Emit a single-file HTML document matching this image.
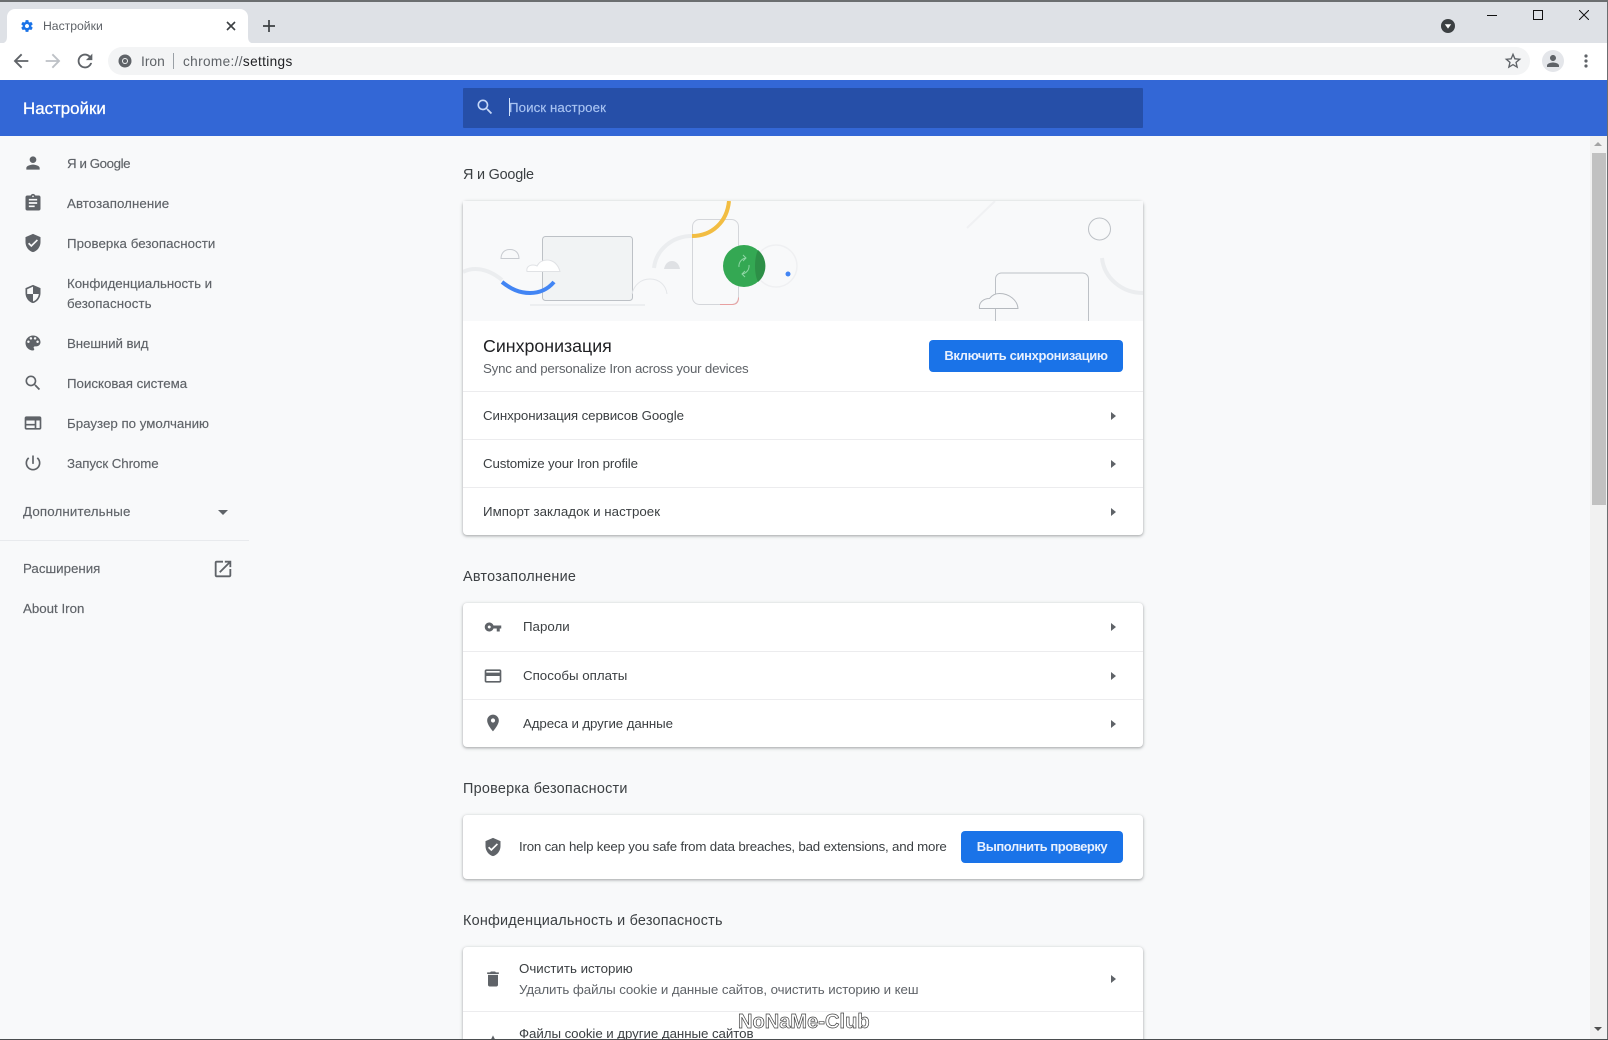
<!DOCTYPE html>
<html lang="ru"><head><meta charset="utf-8"><title>Настройки</title>
<style>
html,body{margin:0;padding:0;width:1608px;height:1040px;overflow:hidden;background:#f8f9fa}
body{position:relative;font-family:"Liberation Sans","Noto Sans CJK SC",sans-serif;font-size:13.3px;color:#3c4043}
.a{position:absolute}
.t{position:absolute;white-space:nowrap;line-height:20px;height:20px}
svg{position:absolute;display:block}
.g{fill:#5f6368}
.side{color:#5f6368;-webkit-text-stroke:.15px #5f6368}
.h2{font-size:14.4px;color:#3c4043;letter-spacing:.25px}
.card{position:absolute;left:463px;width:680px;background:#fff;border-radius:4px;box-shadow:0 1px 2px rgba(60,64,67,.3),0 1px 3px 1px rgba(60,64,67,.15)}
.sep{position:absolute;left:463px;width:680px;height:1px;background:#ececee}
.arr{position:absolute;left:1111px;width:0;height:0;border-left:5px solid #5f6368;border-top:4px solid transparent;border-bottom:4px solid transparent}
.btn{position:absolute;background:#1a73e8;border-radius:4px;color:#e8f0fe;font-weight:bold;text-align:center;height:32px;line-height:32px;font-size:13px;white-space:nowrap}
</style></head><body>

<!-- window chrome -->
<div class="a" style="left:0;top:0;width:1608px;height:43px;background:#dee1e6"></div>
<div class="a" style="left:0;top:0;width:1608px;height:2px;background:#6b6e70"></div>
<div class="a" style="left:0;top:43px;width:1608px;height:37px;background:#fff"></div>
<svg style="left:0;top:9px" width="262" height="35" viewBox="0 0 262 35"><path d="M0 34.5c5 0 7-2 7-7V8a8 8 0 0 1 8-8h225a8 8 0 0 1 8 8v19.5c0 5 2 7 7 7z" fill="#fff"/></svg>
<svg style="left:20px;top:19px" width="14" height="14" viewBox="0 0 24 24"><path fill="#1a73e8" d="M19.43 12.98c.04-.32.07-.64.07-.98s-.03-.66-.07-.98l2.11-1.65c.19-.15.24-.42.12-.64l-2-3.46c-.12-.22-.39-.3-.61-.22l-2.49 1c-.52-.4-1.08-.73-1.69-.98l-.38-2.65C14.46 2.18 14.25 2 14 2h-4c-.25 0-.46.18-.49.42l-.38 2.65c-.61.25-1.17.59-1.69.98l-2.49-1c-.23-.09-.49 0-.61.22l-2 3.46c-.13.22-.07.49.12.64l2.11 1.65c-.04.32-.07.65-.07.98s.03.66.07.98l-2.11 1.65c-.19.15-.24.42-.12.64l2 3.46c.12.22.39.3.61.22l2.49-1c.52.4 1.08.73 1.69.98l.38 2.65c.03.24.24.42.49.42h4c.25 0 .46-.18.49-.42l.38-2.65c.61-.25 1.17-.59 1.69-.98l2.49 1c.23.09.49 0 .61-.22l2-3.46c.12-.22.07-.49-.12-.64l-2.11-1.65zM12 15.5c-1.93 0-3.5-1.57-3.5-3.5s1.57-3.5 3.5-3.5 3.5 1.57 3.5 3.5-1.57 3.5-3.5 3.5z"/></svg>
<div class="t" style="left:43px;top:16px;font-size:12.2px;color:#5f6368">Настройки</div>
<svg style="left:226px;top:21px" width="10" height="10" viewBox="0 0 10 10"><path d="M1 1l8 8M9 1l-8 8" stroke="#3c4043" stroke-width="1.6"/></svg>
<svg style="left:263px;top:20px" width="12" height="12" viewBox="0 0 12 12"><path d="M6 0v12M0 6h12" stroke="#3c4043" stroke-width="1.7"/></svg>
<svg style="left:1441px;top:19px" width="14" height="14" viewBox="0 0 14 14"><circle cx="7" cy="7" r="7" fill="#3c4043"/><path d="M3.8 5.2h6.4L7 9.6z" fill="#fff"/></svg>
<div class="a" style="left:1487px;top:15px;width:10px;height:1px;background:#111"></div>
<div class="a" style="left:1533px;top:10px;width:8px;height:8px;border:1px solid #111"></div>
<svg style="left:1579px;top:10px" width="10" height="10" viewBox="0 0 10 10"><path d="M0 0l10 10M10 0L0 10" stroke="#111" stroke-width="1"/></svg>

<!-- toolbar -->
<svg style="left:10px;top:50px" width="22" height="22" viewBox="0 0 24 24"><path class="g" d="M20 11H7.83l5.59-5.59L12 4l-8 8 8 8 1.41-1.41L7.83 13H20v-2z"/></svg>
<svg style="left:42px;top:50px" width="22" height="22" viewBox="0 0 24 24"><path fill="#bdc1c6" d="M12 4l-1.41 1.41L16.17 11H4v2h12.17l-5.58 5.59L12 20l8-8z"/></svg>
<svg style="left:74px;top:50px" width="22" height="22" viewBox="0 0 24 24"><path class="g" d="M17.65 6.35C16.2 4.9 14.21 4 12 4c-4.42 0-7.99 3.58-7.99 8s3.57 8 7.99 8c3.73 0 6.84-2.55 7.73-6h-2.08c-.82 2.33-3.04 4-5.65 4-3.31 0-6-2.69-6-6s2.69-6 6-6c1.66 0 3.14.69 4.22 1.78L13 11h7V4l-2.35 2.35z"/></svg>
<div class="a" style="left:108px;top:47px;width:1422px;height:28px;border-radius:14px;background:#f3f4f5"></div>
<svg style="left:118px;top:54px" width="14" height="14" viewBox="0 0 14 14"><circle cx="7" cy="7" r="6.5" fill="#5f6368"/><circle cx="7" cy="7" r="3" fill="#f1f3f4"/><circle cx="7" cy="7" r="2" fill="#5f6368"/></svg>
<div class="t" style="left:141px;top:52px;font-size:13.8px;color:#5f6368">Iron</div>
<div class="a" style="left:173px;top:53px;width:1px;height:16px;background:#9aa0a6"></div>
<div class="t" style="left:183px;top:52px;font-size:13.6px;letter-spacing:.36px;color:#5f6368">chrome://<span style="color:#202124">settings</span></div>
<svg style="left:1503px;top:51px" width="20" height="20" viewBox="0 0 24 24"><path class="g" d="M22 9.24l-7.19-.62L12 2 9.19 8.63 2 9.24l5.46 4.73L5.82 21 12 17.27 18.18 21l-1.63-7.03L22 9.24zM12 15.4l-3.76 2.27 1-4.28-3.32-2.88 4.38-.38L12 6.1l1.71 4.04 4.38.38-3.32 2.88 1 4.28L12 15.4z"/></svg>
<div class="a" style="left:1542px;top:50px;width:22px;height:22px;border-radius:50%;background:#e4e6ea"></div>
<svg style="left:1544px;top:52px" width="18" height="18" viewBox="0 0 24 24"><path class="g" d="M12 12c2.21 0 4-1.79 4-4s-1.79-4-4-4-4 1.79-4 4 1.79 4 4 4zm0 2c-2.67 0-8 1.34-8 4v2h16v-2c0-2.66-5.33-4-8-4z"/></svg>
<svg style="left:1583px;top:54px" width="6" height="14" viewBox="0 0 6 14"><circle cx="3" cy="2" r="1.6" fill="#5f6368"/><circle cx="3" cy="7" r="1.6" fill="#5f6368"/><circle cx="3" cy="12" r="1.6" fill="#5f6368"/></svg>

<!-- header -->
<div class="a" style="left:0;top:80px;width:1608px;height:56px;background:#3367d6"></div>
<div class="t" style="left:23px;top:99px;font-size:16.9px;color:#fff;-webkit-text-stroke:.3px #fff">Настройки</div>
<div class="a" style="left:463px;top:88px;width:680px;height:40px;background:#264fa8;border-radius:1px"></div>
<svg style="left:475px;top:97px" width="20" height="20" viewBox="0 0 24 24"><path fill="#c6d8f8" d="M15.5 14h-.79l-.28-.27C15.41 12.59 16 11.11 16 9.5 16 5.91 13.09 3 9.5 3S3 5.91 3 9.5 5.91 16 9.5 16c1.61 0 3.09-.59 4.23-1.57l.27.28v.79l5 4.99L20.49 19l-4.99-5zm-6 0C7.01 14 5 11.99 5 9.5S7.01 5 9.5 5 14 7.01 14 9.5 11.99 14 9.5 14z"/></svg>
<div class="a" style="left:509px;top:98px;width:1px;height:18px;background:#d2e3fc"></div>
<div class="t" style="left:509px;top:98px;color:#a8c3f2;-webkit-text-stroke:.15px #a8c3f2;letter-spacing:.07px">Поиск настроек</div>

<!-- sidebar -->
<svg style="left:23px;top:153px" width="20" height="20" viewBox="0 0 24 24"><path class="g" d="M12 12c2.21 0 4-1.79 4-4s-1.79-4-4-4-4 1.79-4 4 1.79 4 4 4zm0 2c-2.67 0-8 1.34-8 4v2h16v-2c0-2.66-5.33-4-8-4z"/></svg>
<div class="t side" style="left:67px;top:154px;letter-spacing:-.42px">Я и Google</div>
<svg style="left:23px;top:193px" width="20" height="20" viewBox="0 0 24 24"><path class="g" d="M19 3h-4.18C14.4 1.84 13.3 1 12 1c-1.3 0-2.4.84-2.82 2H5c-1.1 0-2 .9-2 2v14c0 1.1.9 2 2 2h14c1.1 0 2-.9 2-2V5c0-1.1-.9-2-2-2zm-7 0c.55 0 1 .45 1 1s-.45 1-1 1-1-.45-1-1 .45-1 1-1zm2 14H7v-2h7v2zm3-4H7v-2h10v2zm0-4H7V7h10v2z"/></svg>
<div class="t side" style="left:67px;top:194px;letter-spacing:.07px">Автозаполнение</div>
<svg style="left:23px;top:233px" width="20" height="20" viewBox="0 0 24 24"><path class="g" d="M12 1L3 5v6c0 5.55 3.84 10.74 9 12 5.16-1.26 9-6.45 9-12V5l-9-4zm-2 16l-4-4 1.41-1.41L10 14.17l6.59-6.59L18 9l-8 8z"/></svg>
<div class="t side" style="left:67px;top:234px;letter-spacing:.05px">Проверка безопасности</div>
<svg style="left:23px;top:284px" width="20" height="20" viewBox="0 0 24 24"><path class="g" d="M12 1L3 5v6c0 5.55 3.84 10.74 9 12 5.16-1.26 9-6.45 9-12V5l-9-4zm0 10.99h7c-.53 4.12-3.28 7.79-7 8.94V12H5V6.3l7-3.11v8.8z"/></svg>
<div class="t side" style="left:67px;top:274px;letter-spacing:-.05px">Конфиденциальность и</div>
<div class="t side" style="left:67px;top:294px;letter-spacing:.09px">безопасность</div>
<svg style="left:23px;top:333px" width="20" height="20" viewBox="0 0 24 24"><path class="g" d="M12 3c-4.97 0-9 4.03-9 9s4.03 9 9 9c.83 0 1.5-.67 1.5-1.5 0-.39-.15-.74-.39-1.01-.23-.26-.38-.61-.38-.99 0-.83.67-1.5 1.5-1.5H16c2.76 0 5-2.24 5-5 0-4.42-4.03-8-9-8zm-5.5 9c-.83 0-1.5-.67-1.5-1.5S5.67 9 6.5 9 8 9.67 8 10.5 7.33 12 6.5 12zm3-4C8.67 8 8 7.33 8 6.5S8.67 5 9.5 5s1.5.67 1.5 1.5S10.33 8 9.5 8zm5 0c-.83 0-1.5-.67-1.5-1.5S13.67 5 14.5 5s1.5.67 1.5 1.5S15.33 8 14.5 8zm3 4c-.83 0-1.5-.67-1.5-1.5S16.67 9 17.5 9s1.5.67 1.5 1.5-.67 1.5-1.5 1.5z"/></svg>
<div class="t side" style="left:67px;top:334px;letter-spacing:-.09px">Внешний вид</div>
<svg style="left:23px;top:373px" width="20" height="20" viewBox="0 0 24 24"><path class="g" d="M15.5 14h-.79l-.28-.27C15.41 12.59 16 11.11 16 9.5 16 5.91 13.09 3 9.5 3S3 5.91 3 9.5 5.91 16 9.5 16c1.61 0 3.09-.59 4.23-1.57l.27.28v.79l5 4.99L20.49 19l-4.99-5zm-6 0C7.01 14 5 11.99 5 9.5S7.01 5 9.5 5 14 7.01 14 9.5 11.99 14 9.5 14z"/></svg>
<div class="t side" style="left:67px;top:374px">Поисковая система</div>
<svg style="left:23px;top:413px" width="20" height="20" viewBox="0 0 24 24"><path class="g" fill-rule="evenodd" d="M4 4h16c1.1 0 2 .9 2 2v12c0 1.1-.9 2-2 2H4c-1.1 0-2-.9-2-2V6c0-1.1.9-2 2-2zm0 5v4h10V9H4zm0 6v3h10v-3H4zm12-6v9h4V9h-4z"/></svg>
<div class="t side" style="left:67px;top:414px">Браузер по умолчанию</div>
<svg style="left:23px;top:453px" width="20" height="20" viewBox="0 0 24 24"><path class="g" d="M13 3h-2v10h2V3zm4.83 2.17l-1.42 1.42C17.99 7.86 19 9.81 19 12c0 3.87-3.13 7-7 7s-7-3.13-7-7c0-2.19 1.01-4.14 2.58-5.42L6.17 5.17C4.23 6.82 3 9.26 3 12c0 4.97 4.03 9 9 9s9-4.03 9-9c0-2.74-1.23-5.18-3.17-6.83z"/></svg>
<div class="t side" style="left:67px;top:454px;letter-spacing:-.08px">Запуск Chrome</div>
<div class="t side" style="left:23px;top:502px;letter-spacing:.16px">Дополнительные</div>
<div class="a" style="left:218px;top:510px;width:0;height:0;border-top:5px solid #5f6368;border-left:5px solid transparent;border-right:5px solid transparent"></div>
<div class="a" style="left:0;top:540px;width:249px;height:1px;background:#e8eaed"></div>
<div class="t side" style="left:23px;top:559px">Расширения</div>
<svg style="left:212px;top:558px" width="22" height="22" viewBox="0 0 24 24"><path class="g" d="M19 19H5V5h7V3H5c-1.11 0-2 .9-2 2v14c0 1.1.89 2 2 2h14c1.1 0 2-.9 2-2v-7h-2v7zM14 3v2h3.59l-9.83 9.83 1.41 1.41L19 6.41V10h2V3h-7z"/></svg>
<div class="t side" style="left:23px;top:599px">About Iron</div>

<!-- section 1 -->
<div class="t h2" style="left:463px;top:165px;letter-spacing:-.2px">Я и Google</div>
<div class="card" style="top:201px;height:334px"></div>
<svg style="left:463px;top:201px" width="680" height="120" viewBox="463 201 680 120">
<rect x="463" y="201" width="680" height="120" fill="#f8f9fa"/>
<path d="M463 272c8-4 22-6 39 8" fill="none" stroke="#ebedef" stroke-width="4"/>
<path d="M654 268c2-18 18-32 38-32" fill="none" stroke="#ebedef" stroke-width="4"/>
<path d="M1102 258c2 20 20 35 41 35" fill="none" stroke="#ebedef" stroke-width="4"/>
<path d="M967 228l28-27" fill="none" stroke="#f0f1f3" stroke-width="2"/>
<path d="M530 305h115" stroke="#eceef0" stroke-width="2"/>
<path d="M501 258.500c0-5 3-9 9-9s9 4 9 9z" fill="#f8f9fa" stroke="#c8cbd0"/>
<rect x="542.500" y="236.500" width="90" height="64" rx="3" fill="#f1f3f4" stroke="#bdc1c6"/>
<path d="M527 271.500c-1-4 2-6.500 6-6.500 1.500 0 3 .3 4 1 2-4 6-6 10-6 6 0 11 4 13 11.500z" fill="#fff" stroke="#e0e2e5"/>
<path d="M632 294c2-9 9-15 18-15 9 0 16 6 17 15" fill="none" stroke="#e4e6e9"/>
<path d="M664 269c1-5 4-8 8-8s7 3 8 8z" fill="#dfe1e4"/>
<path d="M502 282c9 7 17 11 28 11 10 0 18-4 24-11" fill="none" stroke="#4285f4" stroke-width="4"/>
<rect x="692.500" y="219.500" width="46" height="85" rx="7" fill="none" stroke="#d4d6da"/>
<path d="M720 304.500h12c4 0 6.500-2 6.500-7" fill="none" stroke="#e8a0a0"/>
<path d="M692 236c20 0 35-14 37-35" fill="none" stroke="#f2bd42" stroke-width="4"/>
<circle cx="776" cy="266" r="21" fill="#f8f9fa" stroke="#eff0f2" stroke-width="1.500"/>
<circle cx="788" cy="274" r="2.500" fill="#4285f4"/>
<circle cx="744" cy="266" r="21" fill="#34a853"/>
<path d="M758 250a21 21 0 0 1 0 32c-2-4-3-10-3-16s1-12 3-16z" fill="#2d8f47"/>
<path d="M746 258a8 8 0 0 0-7 9M742 274a8 8 0 0 0 7-9M743 255l3 3-3 3M745 271l-3 3 3 3" fill="none" stroke="#8fd6a5" stroke-width="1"/>
<circle cx="1099.500" cy="229" r="11" fill="none" stroke="#bdc1c6"/>
<path d="M995.500 321v-42a6 6 0 0 1 6-6h81a6 6 0 0 1 6 6v42" fill="none" stroke="#bdc1c6"/>
<path d="M979.500 308.500c-1-6 4-10 10-10 3-4 7-5 10-5 10 0 18 7 18.500 15z" fill="#f8f9fa" stroke="#b5b9be"/>
</svg>
<div class="t" style="left:483px;top:336px;font-size:17.8px;color:#202124">Синхронизация</div>
<div class="t" style="left:483px;top:359px;color:#5f6368;letter-spacing:-.21px">Sync and personalize Iron across your devices</div>
<div class="btn" style="left:929px;top:340px;width:194px;letter-spacing:-.35px">Включить синхронизацию</div>
<div class="sep" style="top:391px"></div>
<div class="t" style="left:483px;top:406px;letter-spacing:-.1px">Синхронизация сервисов Google</div><div class="arr" style="top:412px"></div>
<div class="sep" style="top:439px"></div>
<div class="t" style="left:483px;top:454px;letter-spacing:-.15px">Customize your Iron profile</div><div class="arr" style="top:460px"></div>
<div class="sep" style="top:487px"></div>
<div class="t" style="left:483px;top:502px;letter-spacing:.04px">Импорт закладок и настроек</div><div class="arr" style="top:508px"></div>

<!-- section 2 -->
<div class="t h2" style="left:463px;top:567px">Автозаполнение</div>
<div class="card" style="top:603px;height:144px"></div>
<svg style="left:484px;top:618px" width="18" height="18" viewBox="0 0 24 24"><path class="g" d="M12.65 10C11.83 7.67 9.61 6 7 6c-3.31 0-6 2.69-6 6s2.69 6 6 6c2.61 0 4.83-1.67 5.65-4H17v4h4v-4h2v-4H12.65zM7 14c-1.100 0-2-.9-2-2s.9-2 2-2 2 .9 2 2-.9 2-2 2z"/></svg>
<div class="t" style="left:523px;top:617px">Пароли</div><div class="arr" style="top:623px"></div>
<div class="sep" style="top:651px"></div>
<svg style="left:483px;top:666px" width="20" height="20" viewBox="0 0 24 24"><path class="g" d="M20 4H4c-1.110 0-1.990.89-1.990 2L2 18c0 1.110.89 2 2 2h16c1.110 0 2-.89 2-2V6c0-1.110-.89-2-2-2zm0 14H4v-6h16v6zm0-10H4V6h16v2z"/></svg>
<div class="t" style="left:523px;top:666px">Способы оплаты</div><div class="arr" style="top:672px"></div>
<div class="sep" style="top:699px"></div>
<svg style="left:483px;top:713px" width="20" height="20" viewBox="0 0 24 24"><path class="g" d="M12 2C8.130 2 5 5.130 5 9c0 5.250 7 13 7 13s7-7.750 7-13c0-3.870-3.130-7-7-7zm0 9.500c-1.380 0-2.500-1.120-2.500-2.500s1.120-2.500 2.500-2.500 2.500 1.120 2.500 2.500-1.120 2.500-2.500 2.500z"/></svg>
<div class="t" style="left:523px;top:714px;letter-spacing:-.1px">Адреса и другие данные</div><div class="arr" style="top:720px"></div>

<!-- section 3 -->
<div class="t h2" style="left:463px;top:779px">Проверка безопасности</div>
<div class="card" style="top:815px;height:64px"></div>
<svg style="left:483px;top:837px" width="20" height="20" viewBox="0 0 24 24"><path class="g" d="M12 1L3 5v6c0 5.550 3.840 10.740 9 12 5.160-1.260 9-6.450 9-12V5l-9-4zm-2 16l-4-4 1.410-1.410L10 14.170l6.590-6.590L18 9l-8 8z"/></svg>
<div class="t" style="left:519px;top:837px;letter-spacing:-.2px">Iron can help keep you safe from data breaches, bad extensions, and more</div>
<div class="btn" style="left:961px;top:831px;width:162px;letter-spacing:-.45px">Выполнить проверку</div>

<!-- section 4 -->
<div class="t h2" style="left:463px;top:911px;letter-spacing:.22px">Конфиденциальность и безопасность</div>
<div class="card" style="top:947px;height:120px"></div>
<svg style="left:483px;top:969px" width="20" height="20" viewBox="0 0 24 24"><path class="g" d="M6 19c0 1.100.9 2 2 2h8c1.100 0 2-.9 2-2V7H6v12zM19 4h-3.500l-1-1h-5l-1 1H5v2h14V4z"/></svg>
<div class="t" style="left:519px;top:959px">Очистить историю</div>
<div class="t" style="left:519px;top:979.500px;color:#5f6368;letter-spacing:-.07px">Удалить файлы cookie и данные сайтов, очистить историю и кеш</div>
<div class="arr" style="top:975px"></div>
<div class="sep" style="top:1011px"></div>
<div class="t" style="left:519px;top:1024px;letter-spacing:-.06px">Файлы cookie и другие данные сайтов</div>
<svg style="left:485px;top:1034px" width="16" height="16" viewBox="0 0 24 24"><path class="g" d="M12 2l10 20H2z"/></svg>
<div class="t" style="left:738px;top:1011px;font-size:20px;font-weight:bold;letter-spacing:.05px;color:#fff;-webkit-text-stroke:.7px #444;line-height:22px;height:22px">NoNaMe-Club</div>

<!-- scrollbar -->
<div class="a" style="left:1590px;top:136px;width:17px;height:904px;background:#f1f1f1"></div>
<div class="a" style="left:1594px;top:142px;width:0;height:0;border-bottom:4px solid #a3a3a3;border-left:4px solid transparent;border-right:4px solid transparent"></div>
<div class="a" style="left:1592px;top:153px;width:14px;height:352px;background:#c1c1c1"></div>
<div class="a" style="left:1594px;top:1027px;width:0;height:0;border-top:4px solid #505050;border-left:4px solid transparent;border-right:4px solid transparent"></div>
<div class="a" style="left:1607px;top:0;width:1px;height:1040px;background:#6b6e70"></div>
<div class="a" style="left:0;top:1039px;width:1608px;height:1px;background:#4a4d4f"></div>
</body></html>
